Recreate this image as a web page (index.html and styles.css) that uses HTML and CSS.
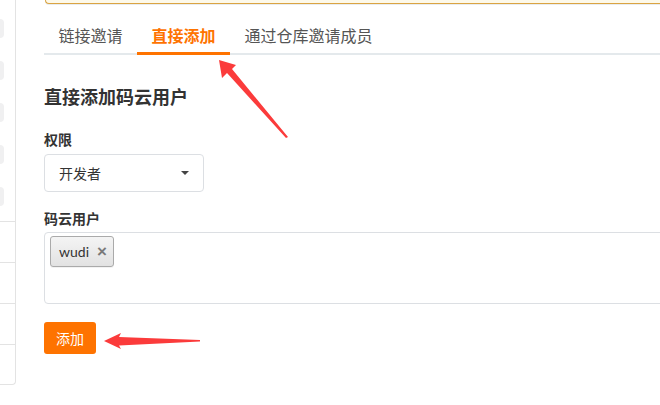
FILE: index.html
```html
<!DOCTYPE html>
<html lang="zh-CN">
<head>
<meta charset="utf-8">
<title>直接添加码云用户</title>
<link rel="stylesheet" href="styles.css">
</head>
<body>
<div class="page">
  <aside class="sidebar">
    <div class="pills">
      <span class="pill"></span>
      <span class="pill"></span>
      <span class="pill"></span>
      <span class="pill"></span>
      <span class="pill"></span>
    </div>
    <div class="rows">
      <div class="row"></div>
      <div class="row"></div>
      <div class="row"></div>
      <div class="row"></div>
    </div>
  </aside>
  <main class="main">
    <div class="alert"></div>
    <nav class="tabs">
      <a class="tab">链接邀请</a>
      <a class="tab active">直接添加</a>
      <a class="tab">通过仓库邀请成员</a>
    </nav>
    <h2 class="title">直接添加码云用户</h2>
    <label class="label">权限</label>
    <div class="select">
      <span>开发者</span>
      <span class="caret"></span>
    </div>
    <label class="label label-users">码云用户</label>
    <div class="tagbox">
      <span class="tag">wudi<span class="tag-x">×</span></span>
    </div>
    <button class="btn">添加</button>
  </main>
  <svg class="arrows" width="660" height="405" viewBox="0 0 660 405">
    <polygon points="219,60 236,65 232,69 288,137 286,138 227,73 222,78" fill="#fb3b3b"/>
    <polygon points="104,341 121,333 119,337 200,340 200,341.5 119,345.5 121,349" fill="#fb3b3b"/>
  </svg>
</div>
</body>
</html>
```
FILE: styles.css
```css
html, body {
  margin: 0;
  padding: 0;
  background: #fff;
  overflow: hidden;
}
body {
  font-family: Lato, "Noto Sans CJK SC", sans-serif;
  color: #333;
}
.page {
  position: relative;
  display: flex;
  width: 760px;
  height: 405px;
}
.sidebar {
  width: 15px;
  height: 384px;
  border-right: 1px solid #e3e3e3;
  border-bottom: 1px solid #e3e3e3;
  border-bottom-right-radius: 4px;
  display: flex;
  flex-direction: column;
  flex-shrink: 0;
}
.pills {
  display: flex;
  flex-direction: column;
  gap: 23px;
  padding-top: 19px;
}
.pill {
  display: block;
  width: 4px;
  height: 19px;
  background: #f0f0f1;
  border-radius: 0 4px 4px 0;
}
.rows {
  margin-top: 15px;
}
.row {
  height: 40px;
  border-top: 1px solid #e3e3e3;
}
.main {
  flex: 1;
  padding-left: 28px;
  display: flex;
  flex-direction: column;
  align-items: flex-start;
}
.alert {
  align-self: stretch;
  margin-left: 1px;
  height: 3px;
  background: #fdf9ea;
  border: 1px solid #dba442;
  border-top: 0;
  border-right: 0;
  border-bottom-left-radius: 4px;
  box-shadow: 0 1px 0 #e8ecef;
}
.tabs {
  align-self: stretch;
  display: flex;
  margin-top: 16px;
  border-bottom: 2px solid #e4e9ec;
}
.tab {
  padding: 5px 14.5px;
  font-size: 16px;
  line-height: 22px;
  color: #555;
  border-bottom: 3px solid transparent;
  margin-bottom: -2px;
}
.tab.active {
  color: #fe7300;
  font-weight: bold;
  border-bottom-color: #fe7300;
}
.title {
  margin: 29px 0 0;
  font-size: 18px;
  line-height: 26px;
  font-weight: bold;
  color: #333;
}
.label {
  display: block;
  margin-top: 20px;
  font-size: 14px;
  line-height: 20px;
  font-weight: bold;
  color: #333;
}
.label-users {
  margin-top: 17px;
}
.select {
  margin-top: 4px;
  box-sizing: border-box;
  width: 160px;
  height: 38px;
  border: 1px solid #dcdfe3;
  border-radius: 4px;
  padding: 0 14px;
  display: flex;
  align-items: center;
  justify-content: space-between;
  font-size: 14px;
  color: #333;
}
.caret {
  width: 0;
  height: 0;
  border-left: 4px solid transparent;
  border-right: 4px solid transparent;
  border-top: 4px solid #444;
}
.tagbox {
  margin-top: 3px;
  align-self: stretch;
  box-sizing: border-box;
  height: 72px;
  border: 1px solid #dcdfe3;
  border-radius: 4px;
  padding: 3px 5px;
  display: flex;
  align-items: flex-start;
}
.tag {
  box-sizing: border-box;
  height: 31px;
  width: 64px;
  display: flex;
  align-items: center;
  justify-content: space-between;
  padding: 0 6px 0 8px;
  border: 1px solid #aaa;
  border-radius: 3px;
  background: linear-gradient(#f4f4f4, #e2e2e2);
  box-shadow: 0 1px 0 rgba(0,0,0,0.05);
  font-size: 14px;
  color: #333;
}
.tag-x {
  font-family: "Liberation Sans", sans-serif;
  font-size: 17px;
  line-height: 1;
  font-weight: bold;
  color: #7a7a7a;
}
.btn {
  margin-top: 18px;
  height: 32px;
  width: 52px;
  padding: 0;
  border: 0;
  border-radius: 3px;
  background: #fe7300;
  color: #fff;
  font-family: Lato, "Noto Sans CJK SC", sans-serif;
  font-size: 14px;
}
.arrows {
  position: absolute;
  top: 0;
  left: 0;
  pointer-events: none;
}
```
